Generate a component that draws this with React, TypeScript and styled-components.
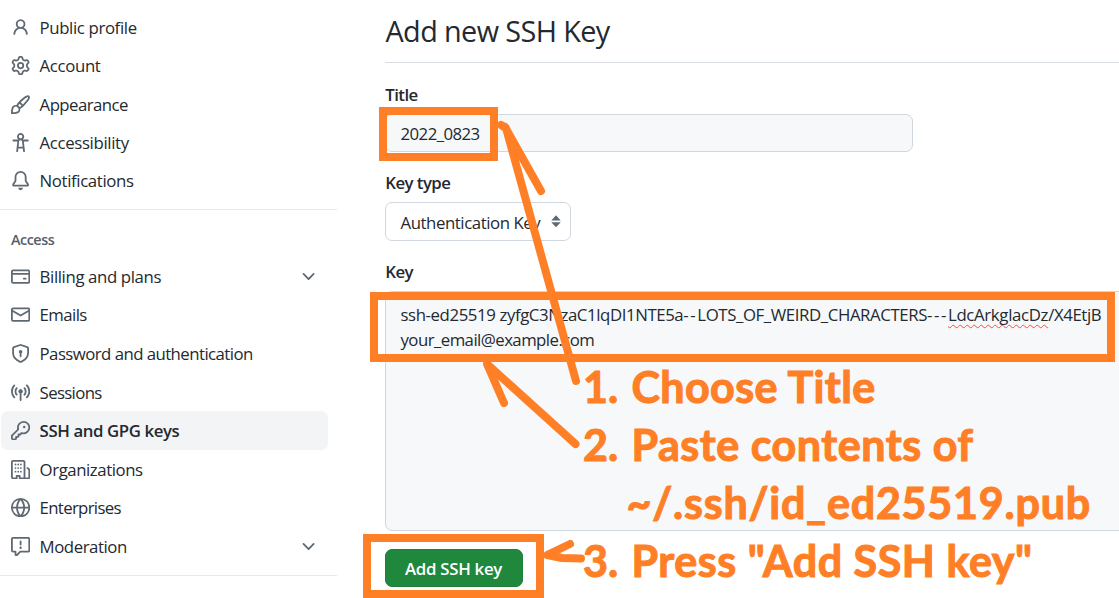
import React from "react";
import styled, { createGlobalStyle, css } from "styled-components";

const GlobalStyle = createGlobalStyle`
  * { box-sizing: border-box; }
  html, body { margin: 0; background: #fff; overflow: hidden; }
  body {
    font-family: "Open Sans", "Noto Sans", sans-serif;
    font-size: 16.8px;
    line-height: 25.2px;
    color: #24292f;
  }
`;

const ORANGE = "#ff7f27";

const Page = styled.div`
  position: relative;
  display: flex;
  gap: 48px;
  width: 1119px;
  height: 598px;
  overflow: hidden;
  background: #fff;
`;

const Sidebar = styled.nav`
  display: flex;
  flex-direction: column;
  flex: none;
  width: 337px;
  padding-top: 8.2px;
`;

const NavGroup = styled.ul<{ $row: number }>`
  display: grid;
  grid-auto-rows: ${(p) => p.$row}px;
  list-style: none;
  margin: 0;
  padding: 0 9px 9.1px 1px;
`;

const NavItem = styled.li<{ $active?: boolean }>`
  display: flex;
  align-items: center;
  gap: 9.4px;
  padding: 0 10px;
  border-radius: 7px;
  ${(p) => p.$active && css`
    background: #f3f4f6;
    font-weight: 600;
  `}
`;

const NavLabel = styled.span<{ $track: number }>`
  flex: 1;
  letter-spacing: ${(p) => p.$track}px;
  white-space: nowrap;
`;

const Divider = styled.hr`
  flex: none;
  width: 100%;
  height: 1px;
  margin: 0;
  border: 0;
  background: #e8eaed;
`;

const GroupTitle = styled.h3`
  margin: 0;
  padding: 20px 0 8px 11px;
  font-size: 14.4px;
  line-height: 19px;
  font-weight: 600;
  letter-spacing: -0.48px;
  color: #57606a;
`;

const IconSvg = styled.svg<{ $size: number }>`
  flex: none;
  width: ${(p) => p.$size}px;
  height: ${(p) => p.$size}px;
  fill: #606973;
`;

const Main = styled.main`
  display: flex;
  flex-direction: column;
  align-items: flex-start;
  gap: 18px;
  flex: none;
  width: 760px;
`;

const Heading = styled.h2`
  width: 100%;
  height: 63px;
  margin: 0;
  padding: 9px 0 0 0.5px;
  border-bottom: 1px solid #d8dee4;
  font-size: 28.8px;
  line-height: 43px;
  font-weight: 400;
  letter-spacing: -0.6px;
`;

const Form = styled.div`
  display: flex;
  flex-direction: column;
  gap: 18px;
  padding-top: 1px;
`;

const Field = styled.div`
  display: flex;
  flex-direction: column;
  gap: 7px;
`;

const Label = styled.label`
  height: 25px;
  padding-left: 0.3px;
  font-weight: 600;
  letter-spacing: -0.55px;
`;

const TextBox = styled.div`
  display: flex;
  align-items: center;
  width: 528px;
  height: 38px;
  padding: 1px 14.5px 0;
  border: 1px solid #d0d7de;
  border-radius: 7px;
  background: #f6f8fa;
  letter-spacing: -0.55px;
`;

const SelectBox = styled.div`
  display: flex;
  align-items: center;
  justify-content: space-between;
  width: 186px;
  height: 39px;
  padding: 2px 5.5px 0 14.5px;
  border: 1px solid #d0d7de;
  border-radius: 7px;
  letter-spacing: -0.43px;
  white-space: nowrap;
`;

const KeyArea = styled.div`
  width: 760px;
  height: 240px;
  padding: 10px 14.5px;
  border: 1px solid #d0d7de;
  border-radius: 7px;
  background: #f6f8fa;
  white-space: nowrap;
`;

const KeyLine = styled.div<{ $track: number }>`
  letter-spacing: ${(p) => p.$track}px;
`;

const Dashes = styled.span`
  letter-spacing: 1.6px;
`;

const Misspelled = styled.span`
  letter-spacing: -0.33px;
  text-decoration: underline wavy #ff4b40 1.2px;
  text-underline-offset: 3px;
  text-decoration-skip-ink: none;
`;

const SubmitButton = styled.button`
  width: 138px;
  height: 38px;
  padding: 1px 1px 0 0;
  border: 1px solid #1f7f3b;
  border-radius: 7px;
  background: #1f883d;
  color: #fff;
  font: 600 16.8px/25px "Open Sans", "Noto Sans", sans-serif;
  letter-spacing: -0.27px;
`;

const Frame = styled.div<{ $x: number; $y: number; $w: number; $h: number }>`
  position: absolute;
  left: ${(p) => p.$x}px;
  top: ${(p) => p.$y}px;
  width: ${(p) => p.$w}px;
  height: ${(p) => p.$h}px;
  border: 8px solid ${ORANGE};
`;

const Arrows = styled.svg`
  position: absolute;
  inset: 0;
  width: 1119px;
  height: 598px;
  fill: none;
  stroke: ${ORANGE};
  stroke-width: 8;
  stroke-linecap: round;
  stroke-linejoin: round;
`;

const Notes = styled.div`
  position: absolute;
  left: 583px;
  top: 358px;
  display: grid;
  grid-template-columns: 43.5px auto;
  grid-auto-rows: 58px;
  font-family: Lato, "Open Sans", sans-serif;
  font-size: 43px;
  line-height: 58px;
  font-weight: 700;
  -webkit-text-stroke: 1.1px ${ORANGE};
  white-space: nowrap;
  color: ${ORANGE};
`;

const NoteText = styled.span<{ $track: number; $indent?: boolean }>`
  grid-column: 2;
  padding-left: ${(p) => (p.$indent ? 5 : 0)}px;
  letter-spacing: ${(p) => p.$track}px;
`;

const ICONS = {
  person: "M10.561 8.073a6.005 6.005 0 0 1 3.432 5.142.75.75 0 1 1-1.498.07 4.5 4.5 0 0 0-8.99 0 .75.75 0 0 1-1.498-.07 6.004 6.004 0 0 1 3.431-5.142 3.999 3.999 0 1 1 5.123 0ZM10.5 5a2.5 2.5 0 1 0-5 0 2.5 2.5 0 0 0 5 0Z",
  gear: "M8 0a8.2 8.2 0 0 1 .701.031C9.444.095 9.99.645 10.16 1.29l.288 1.107c.018.066.079.158.212.224.231.114.454.243.668.386.123.082.233.09.299.071l1.103-.303c.644-.176 1.392.021 1.82.63.27.385.506.792.704 1.218.315.675.111 1.422-.364 1.891l-.814.806c-.049.048-.098.147-.088.294.016.257.016.515 0 .772-.01.147.038.246.088.294l.814.806c.475.469.679 1.216.364 1.891a7.977 7.977 0 0 1-.704 1.217c-.428.61-1.176.807-1.82.63l-1.102-.302c-.067-.019-.177-.011-.3.071a5.909 5.909 0 0 1-.668.386c-.133.066-.194.158-.211.224l-.29 1.106c-.168.646-.715 1.196-1.458 1.26a8.006 8.006 0 0 1-1.402 0c-.743-.064-1.289-.614-1.458-1.26l-.289-1.106c-.018-.066-.079-.158-.212-.224a5.738 5.738 0 0 1-.668-.386c-.123-.082-.233-.09-.299-.071l-1.103.303c-.644.176-1.392-.021-1.82-.63a8.12 8.12 0 0 1-.704-1.218c-.315-.675-.111-1.422.363-1.891l.815-.806c.05-.048.098-.147.088-.294a6.214 6.214 0 0 1 0-.772c.01-.147-.038-.246-.088-.294l-.815-.806C.635 6.045.431 5.298.746 4.623a7.92 7.92 0 0 1 .704-1.217c.428-.61 1.176-.807 1.82-.63l1.102.302c.067.019.177.011.3-.071.214-.143.437-.272.668-.386.133-.066.194-.158.211-.224l.29-1.106C6.009.645 6.556.095 7.299.03 7.53.01 7.764 0 8 0Zm-.571 1.525c-.036.003-.108.036-.137.146l-.289 1.105c-.147.561-.549.967-.998 1.189-.173.086-.34.183-.5.29-.417.278-.97.423-1.529.27l-1.103-.303c-.109-.03-.175.016-.195.045-.22.312-.412.644-.573.99-.014.031-.021.11.059.19l.815.806c.411.406.562.957.53 1.456a4.709 4.709 0 0 0 0 .582c.032.499-.119 1.05-.53 1.456l-.815.806c-.081.08-.073.159-.059.19.162.346.353.677.573.989.02.03.085.076.195.046l1.102-.303c.56-.153 1.113-.008 1.53.27.161.107.328.204.501.29.447.222.85.629.997 1.189l.289 1.105c.029.109.101.143.137.146a6.6 6.6 0 0 0 1.142 0c.036-.003.108-.036.137-.146l.289-1.105c.147-.561.549-.967.998-1.189.173-.086.34-.183.5-.29.417-.278.97-.423 1.529-.27l1.103.303c.109.029.175-.016.195-.045.22-.313.411-.644.573-.99.014-.031.021-.11-.059-.19l-.815-.806c-.411-.406-.562-.957-.53-1.456a4.709 4.709 0 0 0 0-.582c-.032-.499.119-1.05.53-1.456l.815-.806c.081-.08.073-.159.059-.19a6.464 6.464 0 0 0-.573-.989c-.02-.03-.085-.076-.195-.046l-1.102.303c-.56.153-1.113.008-1.53-.27a4.44 4.44 0 0 0-.501-.29c-.447-.222-.85-.629-.997-1.189l-.289-1.105c-.029-.11-.101-.143-.137-.146a6.6 6.6 0 0 0-1.142 0ZM11 8a3 3 0 1 1-6 0 3 3 0 0 1 6 0ZM9.5 8a1.5 1.5 0 1 0-3.001.001A1.5 1.5 0 0 0 9.5 8Z",
  paintbrush: "M11.134 1.535c.7-.509 1.416-.942 2.076-1.155.649-.21 1.463-.267 2.069.34.603.601.568 1.411.368 2.07-.202.668-.624 1.39-1.125 2.096-1.011 1.424-2.496 2.987-3.775 4.249-1.098 1.084-2.132 1.839-3.04 2.3a3.744 3.744 0 0 1-1.055 3.217c-.431.431-1.065.691-1.657.861-.614.177-1.294.287-1.914.357A21.151 21.151 0 0 1 .797 16H.743l.007-.75H.749L.742 16a.75.75 0 0 1-.743-.742l.743-.008-.742.007v-.054a21.25 21.25 0 0 1 .13-2.284c.067-.647.187-1.287.358-1.914.17-.591.43-1.226.86-1.657a3.746 3.746 0 0 1 3.227-1.054c.466-.893 1.225-1.907 2.314-2.982 1.271-1.255 2.833-2.75 4.246-3.777ZM1.62 13.089c-.051.464-.086.929-.104 1.395.466-.018.932-.053 1.396-.104a10.511 10.511 0 0 0 1.668-.309c.526-.151.856-.325 1.011-.48a2.25 2.25 0 1 0-3.182-3.182c-.155.155-.329.485-.48 1.01a10.515 10.515 0 0 0-.309 1.67Zm10.396-10.34c-1.224.89-2.605 2.189-3.822 3.384l1.718 1.718c1.21-1.205 2.51-2.597 3.387-3.833.47-.662.78-1.227.912-1.662.134-.444.032-.551.009-.575h-.001V1.78c-.014-.014-.113-.113-.548.027-.432.14-.995.462-1.655.942Zm-4.832 7.266-.001.001a9.859 9.859 0 0 0 1.63-1.142L7.155 7.216a9.7 9.7 0 0 0-1.161 1.607c.482.302.889.71 1.19 1.192Z",
  accessibility: "M9.923 5.302c.063.063.122.129.178.198H14A.75.75 0 0 1 14 7h-3.3l.578 5.163.362 2.997a.75.75 0 0 1-1.49.18L9.868 13H6.132l-.282 2.34a.75.75 0 0 1-1.49-.18l.362-2.997L5.3 7H2a.75.75 0 0 1 0-1.5h3.9a2.54 2.54 0 0 1 .176-.198 3 3 0 1 1 3.847 0ZM9.2 7.073h-.001a1.206 1.206 0 0 0-2.398 0L6.305 11.5h3.39ZM9.5 3a1.5 1.5 0 1 0-3.001.001A1.5 1.5 0 0 0 9.5 3Z",
  bell: "M8 16a2 2 0 0 0 1.985-1.75c.017-.137-.097-.25-.235-.25h-3.5c-.138 0-.252.113-.235.25A2 2 0 0 0 8 16ZM3 5a5 5 0 0 1 10 0v2.947c0 .05.015.098.042.139l1.703 2.555A1.519 1.519 0 0 1 13.482 13H2.518a1.516 1.516 0 0 1-1.263-2.36l1.703-2.554A.255.255 0 0 0 3 7.947Zm5-3.5A3.5 3.5 0 0 0 4.5 5v2.947c0 .346-.102.683-.294.97l-1.703 2.556a.017.017 0 0 0-.003.01l.001.006c0 .002.002.004.004.006l.006.004.007.001h10.964l.007-.001.006-.004.004-.006.001-.007a.017.017 0 0 0-.003-.01l-1.703-2.554a1.745 1.745 0 0 1-.294-.97V5A3.5 3.5 0 0 0 8 1.5Z",
  card: "M10.75 9a.75.75 0 0 0 0 1.5h1.5a.75.75 0 0 0 0-1.5h-1.5ZM0 3.75C0 2.784.784 2 1.75 2h12.5c.966 0 1.75.784 1.75 1.75v8.5A1.75 1.75 0 0 1 14.25 14H1.75A1.75 1.75 0 0 1 0 12.25ZM14.5 6.5h-13v5.75c0 .138.112.25.25.25h12.5a.25.25 0 0 0 .25-.25Zm0-2.75a.25.25 0 0 0-.25-.25H1.75a.25.25 0 0 0-.25.25V5h13Z",
  mail: "M1.75 2h12.5c.966 0 1.75.784 1.75 1.75v8.5A1.75 1.75 0 0 1 14.25 14H1.75A1.75 1.75 0 0 1 0 12.25v-8.5C0 2.784.784 2 1.75 2ZM1.5 12.251c0 .138.112.25.25.25h12.5a.25.25 0 0 0 .25-.25V5.809L8.38 9.397a.75.75 0 0 1-.76 0L1.5 5.809v6.442Zm13-8.181v-.32a.25.25 0 0 0-.25-.25H1.75a.25.25 0 0 0-.25.25v.32L8 7.88Z",
  shield: "m8.533.133 5.25 1.68A1.75 1.75 0 0 1 15 3.48V7c0 1.566-.32 3.182-1.303 4.682-.983 1.498-2.585 2.813-5.032 3.855a1.697 1.697 0 0 1-1.33 0c-2.447-1.042-4.049-2.357-5.032-3.855C1.32 10.182 1 8.566 1 7V3.48a1.75 1.75 0 0 1 1.217-1.667l5.25-1.68a1.748 1.748 0 0 1 1.066 0Zm-.61 1.429.001.001-5.25 1.68a.251.251 0 0 0-.174.237V7c0 1.36.275 2.666 1.057 3.859.784 1.194 2.121 2.342 4.366 3.298a.196.196 0 0 0 .154 0c2.245-.957 3.582-2.103 4.366-3.297C13.225 9.666 13.5 8.358 13.5 7V3.48a.25.25 0 0 0-.174-.238l-5.25-1.68a.25.25 0 0 0-.153 0ZM9.5 6.5c0 .536-.286 1.032-.75 1.3v2.45a.75.75 0 0 1-1.5 0V7.8A1.5 1.5 0 1 1 9.5 6.5Z",
  broadcast: "M8.75 8.582v5.668a.75.75 0 0 1-1.5 0V8.582a1.75 1.75 0 1 1 1.5 0Zm3.983-7.125a.75.75 0 0 1 1.06.026A7.976 7.976 0 0 1 16 7c0 2.139-.84 4.083-2.207 5.517a.75.75 0 1 1-1.086-1.034A6.474 6.474 0 0 0 14.5 7a6.474 6.474 0 0 0-1.793-4.483.75.75 0 0 1 .026-1.06Zm-9.466 0c.3.286.312.76.026 1.06A6.474 6.474 0 0 0 1.5 7a6.47 6.47 0 0 0 1.793 4.483.75.75 0 0 1-1.086 1.034A7.973 7.973 0 0 1 0 7c0-2.139.84-4.083 2.207-5.517a.75.75 0 0 1 1.06-.026Zm8.556 2.321A4.988 4.988 0 0 1 13 7a4.988 4.988 0 0 1-1.177 3.222.75.75 0 1 1-1.146-.967A3.487 3.487 0 0 0 11.5 7c0-.86-.309-1.645-.823-2.255a.75.75 0 0 1 1.146-.967Zm-6.492.958A3.48 3.48 0 0 0 4.5 7a3.48 3.48 0 0 0 .823 2.255.75.75 0 0 1-1.146.967A4.981 4.981 0 0 1 3 7a4.982 4.982 0 0 1 1.188-3.236.75.75 0 1 1 1.143.972Z",
  key: "M10.5 0a5.499 5.499 0 1 1-1.288 10.848l-.932.932a.749.749 0 0 1-.53.22H7v.75a.749.749 0 0 1-.22.53l-.5.5a.749.749 0 0 1-.53.22H5v.75a.749.749 0 0 1-.22.53l-.5.5a.749.749 0 0 1-.53.22h-2A1.75 1.75 0 0 1 0 14.25v-2c0-.199.079-.389.22-.53l4.932-4.932A5.5 5.5 0 0 1 10.5 0Zm-4 5.5c-.001.431.069.86.205 1.269a.75.75 0 0 1-.181.768L1.5 12.56v1.69c0 .138.112.25.25.25h1.69l.06-.06v-1.19a.75.75 0 0 1 .75-.75h1.19l.06-.06v-1.19a.75.75 0 0 1 .75-.75h1.19l1.023-1.025a.75.75 0 0 1 .768-.18A4 4 0 1 0 6.5 5.5ZM11 6a1 1 0 1 1 0-2 1 1 0 0 1 0 2Z",
  organization: "M1.75 16A1.75 1.75 0 0 1 0 14.25V1.75C0 .784.784 0 1.75 0h8.5C11.216 0 12 .784 12 1.75v12.5c0 .085-.006.168-.018.25h2.268a.25.25 0 0 0 .25-.25V8.285a.25.25 0 0 0-.111-.208l-1.055-.703a.749.749 0 1 1 .832-1.248l1.055.703c.487.325.779.871.779 1.456v5.965A1.75 1.75 0 0 1 14.25 16h-3.5a.766.766 0 0 1-.197-.026c-.099.017-.2.026-.303.026h-3a.75.75 0 0 1-.75-.75V14h-1v1.25a.75.75 0 0 1-.75.75Zm-.25-1.75c0 .138.112.25.25.25H4v-1.25a.75.75 0 0 1 .75-.75h2.5a.75.75 0 0 1 .75.75v1.25h2.25a.25.25 0 0 0 .25-.25V1.75a.25.25 0 0 0-.25-.25h-8.5a.25.25 0 0 0-.25.25ZM3.75 3a.75.75 0 0 1 0 1.500.75.75 0 0 1 0-1.500ZM6 3a.75.75 0 0 1 0 1.500.75.75 0 0 1 0-1.500ZM8.250 3a.75.75 0 0 1 0 1.500.75.75 0 0 1 0-1.500ZM3.750 6a.75.75 0 0 1 0 1.500.75.75 0 0 1 0-1.500ZM6 6a.75.75 0 0 1 0 1.500.75.75 0 0 1 0-1.500ZM8.250 6a.75.75 0 0 1 0 1.500.75.75 0 0 1 0-1.500ZM3.750 9a.75.75 0 0 1 0 1.500.75.75 0 0 1 0-1.500ZM6 9a.75.75 0 0 1 0 1.500.75.75 0 0 1 0-1.500ZM8.250 9a.75.75 0 0 1 0 1.500.75.75 0 0 1 0-1.500Z",
  globe: "M8 0a8 8 0 1 1 0 16A8 8 0 0 1 8 0ZM5.78 8.75a9.64 9.64 0 0 0 1.363 4.177c.255.426.542.832.857 1.215.245-.296.551-.705.857-1.215A9.64 9.64 0 0 0 10.22 8.75Zm4.44-1.5a9.64 9.64 0 0 0-1.363-4.177c-.307-.51-.612-.919-.857-1.215a9.927 9.927 0 0 0-.857 1.215A9.64 9.64 0 0 0 5.78 7.25Zm-5.944 1.5H1.543a6.507 6.507 0 0 0 4.666 5.5c-.123-.181-.24-.365-.352-.552-.715-1.192-1.437-2.874-1.581-4.948Zm-2.733-1.5h2.733c.144-2.074.866-3.756 1.58-4.948.12-.197.237-.381.353-.552a6.507 6.507 0 0 0-4.666 5.5Zm10.181 1.5c-.144 2.074-.866 3.756-1.58 4.948-.12.197-.237.381-.353.552a6.507 6.507 0 0 0 4.666-5.5Zm2.733-1.5a6.507 6.507 0 0 0-4.666-5.5c.123.181.24.365.353.552.714 1.192 1.436 2.874 1.58 4.948Z",
  report: "M0 1.75C0 .784.784 0 1.75 0h12.5C15.216 0 16 .784 16 1.75v9.5A1.75 1.75 0 0 1 14.25 13H8.06l-2.573 2.573A1.458 1.458 0 0 1 3 14.543V13H1.75A1.75 1.75 0 0 1 0 11.25Zm1.75-.25a.25.25 0 0 0-.25.25v9.5c0 .138.112.25.25.25h2a.75.75 0 0 1 .75.75v2.19l2.72-2.72a.749.749 0 0 1 .53-.22h6.5a.25.25 0 0 0 .25-.25v-9.5a.25.25 0 0 0-.25-.25Zm7 2.25v2.5a.75.75 0 0 1-1.5 0v-2.5a.75.75 0 0 1 1.5 0ZM9 9a1 1 0 1 1-2 0 1 1 0 0 1 2 0Z",
  chevron: "M12.78 5.22a.749.749 0 0 1 0 1.06l-4.25 4.25a.749.749 0 0 1-1.06 0L3.22 6.28a.749.749 0 1 1 1.06-1.06L8 8.939l3.72-3.719a.749.749 0 0 1 1.06 0Z",
  updown: "M8 1.200 12.200 5.800H3.800ZM8 11.800 12.200 7.300H3.800Z",
};

type IconName = keyof typeof ICONS;

const Icon = ({ name, size = 19.2 }: { name: IconName; size?: number }) => (
  <IconSvg $size={size} viewBox="0 0 16 16" aria-hidden="true">
    <path d={ICONS[name]} />
  </IconSvg>
);

interface Entry {
  icon: IconName;
  label: string;
  track: number;
  active?: boolean;
  expandable?: boolean;
}

const PROFILE: Entry[] = [
  { icon: "person", label: "Public profile", track: -0.37 },
  { icon: "gear", label: "Account", track: -0.35 },
  { icon: "paintbrush", label: "Appearance", track: -0.55 },
  { icon: "accessibility", label: "Accessibility", track: -0.35 },
  { icon: "bell", label: "Notifications", track: -0.37 },
];

const ACCESS: Entry[] = [
  { icon: "card", label: "Billing and plans", track: -0.38, expandable: true },
  { icon: "mail", label: "Emails", track: -0.58 },
  { icon: "shield", label: "Password and authentication", track: -0.55 },
  { icon: "broadcast", label: "Sessions", track: -0.65 },
  { icon: "key", label: "SSH and GPG keys", track: -0.4, active: true },
  { icon: "organization", label: "Organizations", track: -0.43 },
  { icon: "globe", label: "Enterprises", track: -0.68 },
  { icon: "report", label: "Moderation", track: -0.45, expandable: true },
];

const NavList = ({ items, row }: { items: Entry[]; row: number }) => (
  <NavGroup $row={row}>
    {items.map((item) => (
      <NavItem key={item.label} $active={item.active}>
        <Icon name={item.icon} />
        <NavLabel $track={item.track}>{item.label}</NavLabel>
        {item.expandable && <Icon name="chevron" />}
      </NavItem>
    ))}
  </NavGroup>
);

export default function App() {
  return (
    <>
      <GlobalStyle />
      <Page>
        <Sidebar>
          <NavList items={PROFILE} row={38.4} />
          <Divider />
          <GroupTitle>Access</GroupTitle>
          <NavList items={ACCESS} row={38.55} />
          <Divider />
        </Sidebar>
        <Main>
          <Heading>Add new SSH Key</Heading>
          <Form>
            <Field>
              <Label>Title</Label>
              <TextBox>2022_0823</TextBox>
            </Field>
            <Field>
              <Label>Key type</Label>
              <SelectBox>
                Authentication Key
                <Icon name="updown" size={18} />
              </SelectBox>
            </Field>
            <Field>
              <Label>Key</Label>
              <KeyArea>
                <KeyLine $track={-0.4}>
                  ssh-ed25519 zyfgC3NzaC1lqDI1NTE5a<Dashes>--</Dashes>
                  LOTS_OF_WEIRD_CHARACTERS<Dashes>---</Dashes>
                  <Misspelled>LdcArkglacDz</Misspelled>/X4EtjB
                </KeyLine>
                <KeyLine $track={-0.55}>your_email@example.com</KeyLine>
              </KeyArea>
            </Field>
          </Form>
          <SubmitButton>Add SSH key</SubmitButton>
        </Main>
        <Frame $x={379} $y={107} $w={119} $h={54} />
        <Frame $x={370} $y={292} $w={745} $h={70} />
        <Frame $x={363} $y={534} $w={181} $h={64} />
        <Arrows viewBox="0 0 1119 598">
          <path d="M576 381 506 128 501 125M541 191 505 127" />
          <path d="M575.500 444 487 364 504 403" />
          <path d="M581 558.500 562 558 547 555 570 544" />
        </Arrows>
        <Notes>
          <span>1.</span>
          <NoteText $track={0.4} $indent>Choose Title</NoteText>
          <span>2.</span>
          <NoteText $track={0.55} $indent>Paste contents of</NoteText>
          <NoteText $track={0.78}>~/.ssh/id_ed25519.pub</NoteText>
          <span>3.</span>
          <NoteText $track={0.55} $indent>Press "Add SSH key"</NoteText>
        </Notes>
      </Page>
    </>
  );
}
